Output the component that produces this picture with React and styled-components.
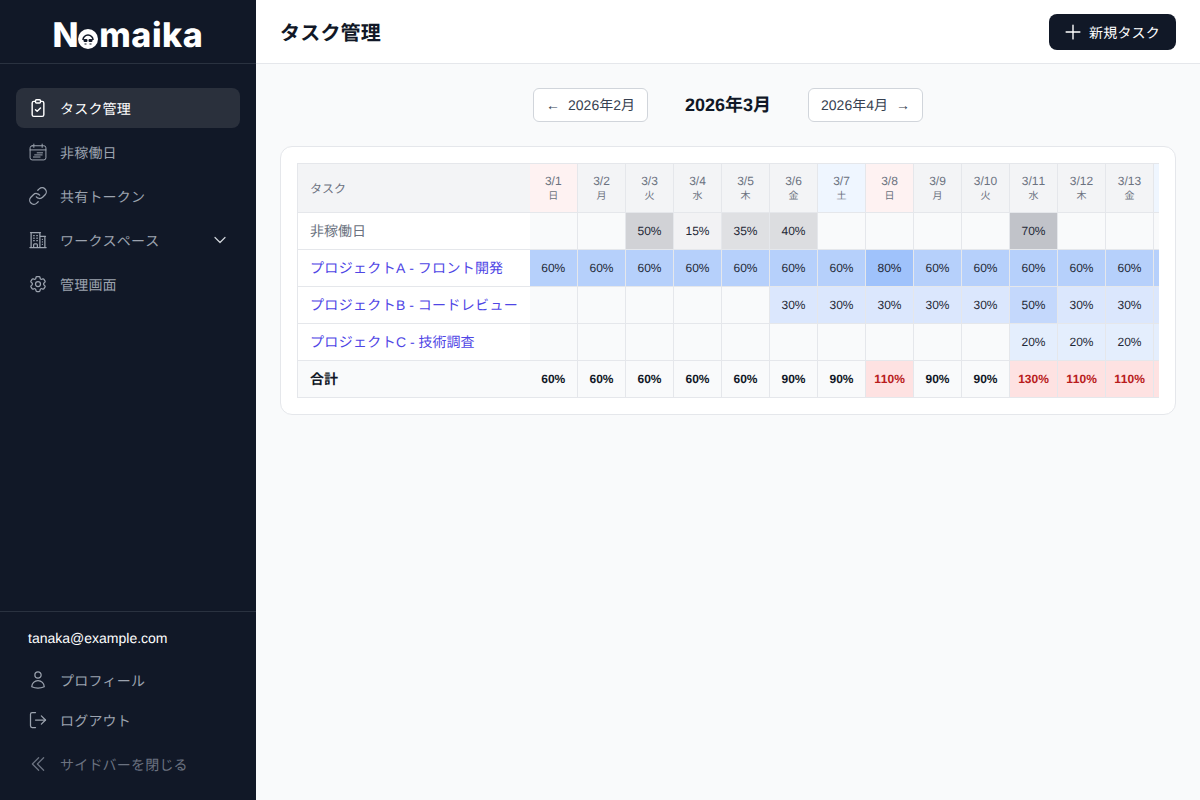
import React from 'react';
import styled, { createGlobalStyle } from 'styled-components';
import { HiOutlineBuildingOffice2, HiOutlineCog6Tooth, HiOutlineUser, HiOutlineChevronDoubleLeft, HiOutlineChevronDown, HiOutlinePlus } from 'react-icons/hi2';
import { Link as LinkIcon, LogOut } from 'lucide-react';

const FONT = '"Liberation Sans", "Noto Sans CJK JP", sans-serif';
const Global = createGlobalStyle`
  html, body { margin: 0; padding: 0; height: 100%; background: #f9fafb; }
  body { font-family: ${FONT}; overflow: hidden; }
  * { box-sizing: border-box; text-rendering: geometricPrecision; font-kerning: none; }
`;
const Page = styled.div`display: flex; width: 1200px; height: 800px;`;
const Sidebar = styled.aside`width: 256px; flex: none; height: 800px; background: #111827; display: flex; flex-direction: column;`;
const LogoBar = styled.div`height: 64px; flex: none; border-bottom: 1px solid #2a3240; display: flex; align-items: center; justify-content: center;`;
const LogoText = styled.div`font-family: Inter, sans-serif; font-weight: 800; font-size: 34px; letter-spacing: 0.6px; color: #fff; display: flex; align-items: center; line-height: 1; padding-top: 8px;`;
const LogoMark = styled.svg`width: 20px; height: 20px; margin: 6px 1px 0 -1px; flex: none;`;
const Nav = styled.nav`flex: 1; padding: 24px 16px 0; display: flex; flex-direction: column; gap: 4px;`;
const Label = styled.span`padding-top: 2px; letter-spacing: 0.2px; white-space: nowrap;`;
const NavItem = styled.div`
  height: 40px; padding: 0 12px; border-radius: 8px; display: flex; align-items: center; gap: 12px; font-size: 14px;
  color: ${p => p.$active ? '#fff' : '#9ca3af'}; background: ${p => p.$active ? '#2a303c' : 'transparent'};
  svg.icon { width: 20px; height: 20px; flex: none; }
`;
const Chevron = styled(HiOutlineChevronDown)`color: #d1d5db; stroke-width: 1.8;`;
const Grow = styled.span`flex: 1;`;
const Foot = styled.div`border-top: 1px solid #2a3240; height: 189px; flex: none; padding: 16px 16px 0;`;
const Email = styled.div`padding: 0 12px; font-size: 14px; line-height: 20px; color: #fff; margin-bottom: 12px;`;
const FootItem = styled.div`
  height: 40px; padding: 0 12px; display: flex; align-items: center; gap: 12px; font-size: 14px; color: #9ca3af;
  svg { width: 20px; height: 20px; flex: none; }
`;
const Collapse = styled(FootItem)`color: #6b7280; margin-top: 4px;`;
const Main = styled.main`flex: 1; min-width: 0; display: flex; flex-direction: column;`;
const Header = styled.header`height: 64px; flex: none; background: #fff; border-bottom: 1px solid #e5e7eb; padding: 0 24px; display: flex; align-items: center; justify-content: space-between;`;
const Title = styled.h1`margin: 0; padding-top: 5px; font-size: 20px; font-weight: 700; color: #111827; line-height: 28px; letter-spacing: 0.2px;`;
const NewBtn = styled.button`
  height: 36px; width: 127px; padding: 0 0 0 13px; border: 0; border-radius: 8px; background: #111827; color: #fff; font-family: ${FONT}; font-size: 14px;
  display: flex; align-items: center; gap: 5px;
  svg { width: 22px; height: 22px; stroke-width: 1.5; flex: none; }
`;
const Content = styled.div`padding: 24px;`;
const MonthNav = styled.div`display: flex; align-items: center; justify-content: center; gap: 37px; height: 34px; margin-bottom: 24px;`;
const MonthBtn = styled.button`
  height: 34px; width: 115px; padding: 0; background: #fff; border: 1px solid #d1d5db; border-radius: 6px; color: #374151; font-family: ${FONT}; font-size: 14px;
  display: flex; align-items: center; justify-content: center; gap: 8px;
`;
const MonthLabel = styled.div`font-size: 18px; font-weight: 700; color: #111827; width: 86px; padding-bottom: 2px; text-align: center; white-space: nowrap;`;
const Card = styled.section`background: #fff; border: 1px solid #e5e7eb; border-radius: 12px; padding: 16px; height: 269px;`;
const Scroll = styled.div`overflow: hidden; width: 862px;`;
const Table = styled.table`border-collapse: collapse; table-layout: fixed; width: 1720px; font-size: 12px;`;
const HeadTask = styled.th`width: 232px; height: 49px; background: #f3f4f6; border: 1px solid #e5e7eb; border-right: 0; padding: 0 12px; font-size: 12px; font-weight: 400; color: #6b7280; text-align: left;`;
const HeadDay = styled.th`
  width: 48px; height: 49px; padding: 0; font-weight: 400; text-align: center; border: 1px solid #e5e7eb; border-left: 0; color: #6b7280; font-size: 12px; line-height: 16px;
  background: ${p => p.$kind === 'sun' ? '#fef2f2' : p.$kind === 'sat' ? '#eff6ff' : '#f3f4f6'};
  small { display: block; font-size: 10px; line-height: 15px; }
`;
const Kana = styled.span`letter-spacing: 0.33px;`;
const RowLabel = styled.td`
  height: 37px; padding: 0 12px; font-size: 14px; line-height: 20px; white-space: nowrap; background: #fff; border: 1px solid #e5e7eb; border-right: 0;
  color: ${p => p.$muted ? '#6b7280' : '#4f46e5'};
`;
const Cell = styled.td`height: 37px; padding: 0; text-align: center; font-size: 12px; line-height: 16px; color: #1f2937; border: 1px solid #e5e7eb; border-left: 0;`;
const TotalLabel = styled.td`height: 37px; padding: 0 12px; font-size: 14px; line-height: 20px; font-weight: 700; color: #111827; background: #f9fafb; border: 1px solid #e5e7eb; border-right: 0;`;
const TotalCell = styled.td`
  height: 37px; padding: 0; text-align: center; font-size: 12px; line-height: 16px; font-weight: 700; border: 1px solid #e5e7eb; border-left: 0;
  color: ${p => p.$over ? '#b91c1c' : '#111827'}; background: ${p => p.$over ? '#fee2e2' : '#f9fafb'};
`;

const ClipIcon = () => (
  <svg className="icon" viewBox="0 0 24 24" fill="none" stroke="currentColor" strokeWidth="1.7" strokeLinecap="round" strokeLinejoin="round">
    <rect x="9" y="2" width="6" height="4" rx="1.2" />
    <path d="M15.5 4H17a2 2 0 0 1 2 2v14a2 2 0 0 1-2 2H7a2 2 0 0 1-2-2V6a2 2 0 0 1 2-2h1.500" />
    <path d="m9 14 2 2 4-4" />
  </svg>
);
const CalIcon = () => (
  <svg className="icon" viewBox="0 0 24 24" fill="none" stroke="currentColor" strokeWidth="1.2" strokeLinecap="round" strokeLinejoin="round">
    <rect x="2.500" y="4.500" width="19" height="17" rx="2.500" />
    <path d="M2.500 9.500h19M7 2.500v4M17 2.500v4M11 13h6.500M8 15.500h9M6.500 18h8" />
  </svg>
);
const Mark = () => (
  <LogoMark viewBox="0 0 20 20">
    <circle cx="10" cy="10" r="10" fill="#fff" />
    <path d="M5 11 a5 5 0 0 1 10 0" fill="none" stroke="#111827" strokeWidth="1.600" />
    <rect x="5.500" y="10" width="4" height="3" rx="1.200" fill="#111827" />
    <rect x="10.500" y="10" width="4" height="3" rx="1.200" fill="#111827" />
    <path d="M6.500 15h2M11.500 15h2" stroke="#111827" strokeWidth="1.200" />
  </LogoMark>
);

const wk = ['日','月','火','水','木','金','土'];
const days = Array.from({ length: 31 }, (_, i) => {
  const d = i + 1;
  const w = i === 6 || i === 13 || i === 20 || i === 27 ? 6 : (i === 0 || i === 7 || i === 14 || i === 21 || i === 28) ? 0 : (i % 7);
  return { label: `3/${d}`, w: wk[w], kind: w === 0 ? 'sun' : w === 6 ? 'sat' : '' };
});
const off = { 3: 50, 4: 15, 5: 35, 6: 40, 11: 70 };
const offBg = { 50: '#d1d2d6', 15: '#f2f2f4', 35: '#dfe0e3', 40: '#dcdde0', 70: '#c1c3c9' };
const blue = { 80: '#9fc2fb', 60: '#b6d0fb', 50: '#c4d8fc', 30: '#dbe7fd', 20: '#e4eefd' };
const pA = d => (d === 8 ? 80 : 60);
const pB = d => (d < 6 ? 0 : d === 11 ? 50 : 30);
const pC = d => (d < 11 ? 0 : 20);
const totals = d => pA(d) + pB(d) + pC(d);

const projects = [
  { id: 'a', name: <><Kana>プロジェクト</Kana>A - <Kana>フロント</Kana>開発</>, fn: pA },
  { id: 'b', name: <><Kana>プロジェクト</Kana>B - <Kana>コードレビュー</Kana></>, fn: pB },
  { id: 'c', name: <><Kana>プロジェクト</Kana>C - 技術調査</>, fn: pC },
];

export default function App() {
  return (
    <Page>
      <Global />
      <Sidebar>
        <LogoBar><LogoText>N<Mark />maika</LogoText></LogoBar>
        <Nav>
          <NavItem $active><ClipIcon /><Label>タスク管理</Label></NavItem>
          <NavItem><CalIcon /><Label>非稼働日</Label></NavItem>
          <NavItem><LinkIcon className="icon" strokeWidth={1.5} /><Label>共有トークン</Label></NavItem>
          <NavItem><HiOutlineBuildingOffice2 className="icon" /><Label>ワークスペース</Label><Grow /><Chevron size={16} /></NavItem>
          <NavItem><HiOutlineCog6Tooth className="icon" /><Label>管理画面</Label></NavItem>
        </Nav>
        <Foot>
          <Email>tanaka@example.com</Email>
          <FootItem><HiOutlineUser /><Label>プロフィール</Label></FootItem>
          <FootItem><LogOut strokeWidth={1.5} /><Label>ログアウト</Label></FootItem>
          <Collapse><HiOutlineChevronDoubleLeft /><Label>サイドバーを閉じる</Label></Collapse>
        </Foot>
      </Sidebar>
      <Main>
        <Header>
          <Title>タスク管理</Title>
          <NewBtn><HiOutlinePlus /><Label>新規タスク</Label></NewBtn>
        </Header>
        <Content>
          <MonthNav>
            <MonthBtn><span>←</span>2026年2月</MonthBtn>
            <MonthLabel>2026年3月</MonthLabel>
            <MonthBtn>2026年4月<span>→</span></MonthBtn>
          </MonthNav>
          <Card>
            <Scroll>
              <Table>
                <thead>
                  <tr>
                    <HeadTask>タスク</HeadTask>
                    {days.map(d => <HeadDay key={d.label} $kind={d.kind}>{d.label}<small>{d.w}</small></HeadDay>)}
                  </tr>
                </thead>
                <tbody>
                  <tr>
                    <RowLabel $muted>非稼働日</RowLabel>
                    {days.map((_, i) => <Cell key={i} style={{ background: off[i + 1] ? offBg[off[i + 1]] : '#f9fafb' }}>{off[i + 1] ? `${off[i + 1]}%` : ''}</Cell>)}
                  </tr>
                  {projects.map(({ id, name, fn }) => (
                    <tr key={id}>
                      <RowLabel>{name}</RowLabel>
                      {days.map((_, i) => {
                        const v = fn(i + 1);
                        return <Cell key={i} style={{ background: v ? blue[v] : '#f9fafb' }}>{v ? `${v}%` : ''}</Cell>;
                      })}
                    </tr>
                  ))}
                  <tr>
                    <TotalLabel>合計</TotalLabel>
                    {days.map((_, i) => {
                      const v = totals(i + 1);
                      return <TotalCell key={i} $over={v > 100}>{v}%</TotalCell>;
                    })}
                  </tr>
                </tbody>
              </Table>
            </Scroll>
          </Card>
        </Content>
      </Main>
    </Page>
  );
}
